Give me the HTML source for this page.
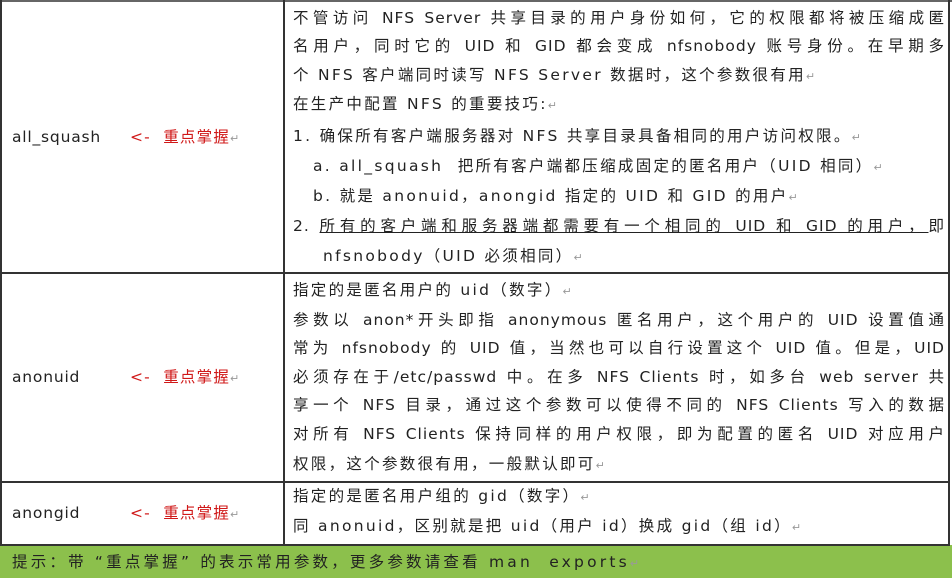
<!DOCTYPE html>
<html><head><meta charset="utf-8"><style>
body{margin:0;width:952px;height:578px;background:#fff;overflow:hidden;position:relative;
font-family:"DejaVu Sans","Noto Sans CJK SC",sans-serif;font-size:15.5px;color:#222;}
.b{position:absolute;background:#333;}
.l{position:absolute;left:293px;width:652px;white-space:nowrap;letter-spacing:2.3px;line-height:20px;}
.j{text-align:justify;text-align-last:justify;white-space:normal;letter-spacing:1px;}
.k{position:absolute;left:12px;letter-spacing:0.8px;line-height:20px;}
.r{position:absolute;left:130px;color:#d01818;line-height:20px;letter-spacing:1.2px;}
.m{color:#999;font-size:11px;}
.f{position:absolute;left:0;top:545px;width:952px;height:33px;background:#8cc04c;}
</style></head><body>
<div class="b" style="left:0;top:0;width:952px;height:2px;background:#666"></div>
<div class="b" style="left:0;top:0;width:2px;height:578px"></div>
<div class="b" style="left:948px;top:0;width:2px;height:578px"></div>
<div class="b" style="left:283px;top:0;width:2px;height:545px"></div>
<div class="b" style="left:0;top:272px;width:950px;height:2px"></div>
<div class="b" style="left:0;top:481px;width:950px;height:2px"></div>
<div class="f"></div>
<div class="b" style="left:0;top:544px;width:950px;height:2px"></div>

<div class="k" style="top:127px">all_squash</div><div class="r" style="top:127px">&lt;-&nbsp; 重点掌握<span class="m">↵</span></div>
<div class="k" style="top:367px">anonuid</div><div class="r" style="top:367px">&lt;-&nbsp; 重点掌握<span class="m">↵</span></div>
<div class="k" style="top:503px">anongid</div><div class="r" style="top:503px">&lt;-&nbsp; 重点掌握<span class="m">↵</span></div>

<div class="l j" style="top:8px">不管访问 NFS Server 共享目录的用户身份如何，它的权限都将被压缩成匿</div>
<div class="l j" style="top:36px">名用户，同时它的 UID 和 GID 都会变成 nfsnobody 账号身份。在早期多</div>
<div class="l" style="top:65px">个 NFS 客户端同时读写 NFS Server 数据时，这个参数很有用<span class="m">↵</span></div>
<div class="l" style="top:94px">在生产中配置 NFS 的重要技巧:<span class="m">↵</span></div>
<div class="l" style="top:126px">1. 确保所有客户端服务器对 NFS 共享目录具备相同的用户访问权限。<span class="m">↵</span></div>
<div class="l" style="top:156px;left:313px">a. all_squash&nbsp; 把所有客户端都压缩成固定的匿名用户（UID 相同）<span class="m">↵</span></div>
<div class="l" style="top:186px;left:313px">b. 就是 anonuid，anongid 指定的 UID 和 GID 的用户<span class="m">↵</span></div>
<div class="l j" style="top:216px">2. <span style="text-decoration:underline">所有的客户端和服务器端都需要有一个相同的 UID 和 GID 的用户，</span>即</div>
<div class="l" style="top:246px;left:323px">nfsnobody（UID 必须相同）<span class="m">↵</span></div>

<div class="l" style="top:280px">指定的是匿名用户的 uid（数字）<span class="m">↵</span></div>
<div class="l j" style="top:310px">参数以 anon*开头即指 anonymous 匿名用户，这个用户的 UID 设置值通</div>
<div class="l j" style="top:338px">常为 nfsnobody 的 UID 值，当然也可以自行设置这个 UID 值。但是，UID</div>
<div class="l j" style="top:367px">必须存在于/etc/passwd 中。在多 NFS Clients 时，如多台 web server 共</div>
<div class="l j" style="top:395px">享一个 NFS 目录，通过这个参数可以使得不同的 NFS Clients 写入的数据</div>
<div class="l j" style="top:424px">对所有 NFS Clients 保持同样的用户权限，即为配置的匿名 UID 对应用户</div>
<div class="l" style="top:454px">权限，这个参数很有用，一般默认即可<span class="m">↵</span></div>

<div class="l" style="top:486px">指定的是匿名用户组的 gid（数字）<span class="m">↵</span></div>
<div class="l" style="top:516px">同 anonuid，区别就是把 uid（用户 id）换成 gid（组 id）<span class="m">↵</span></div>

<div class="l" style="top:552px;left:12px;letter-spacing:3.2px">提示：带 “重点掌握” 的表示常用参数，更多参数请查看 man&nbsp; exports<span class="m">↵</span></div>
</body></html>
